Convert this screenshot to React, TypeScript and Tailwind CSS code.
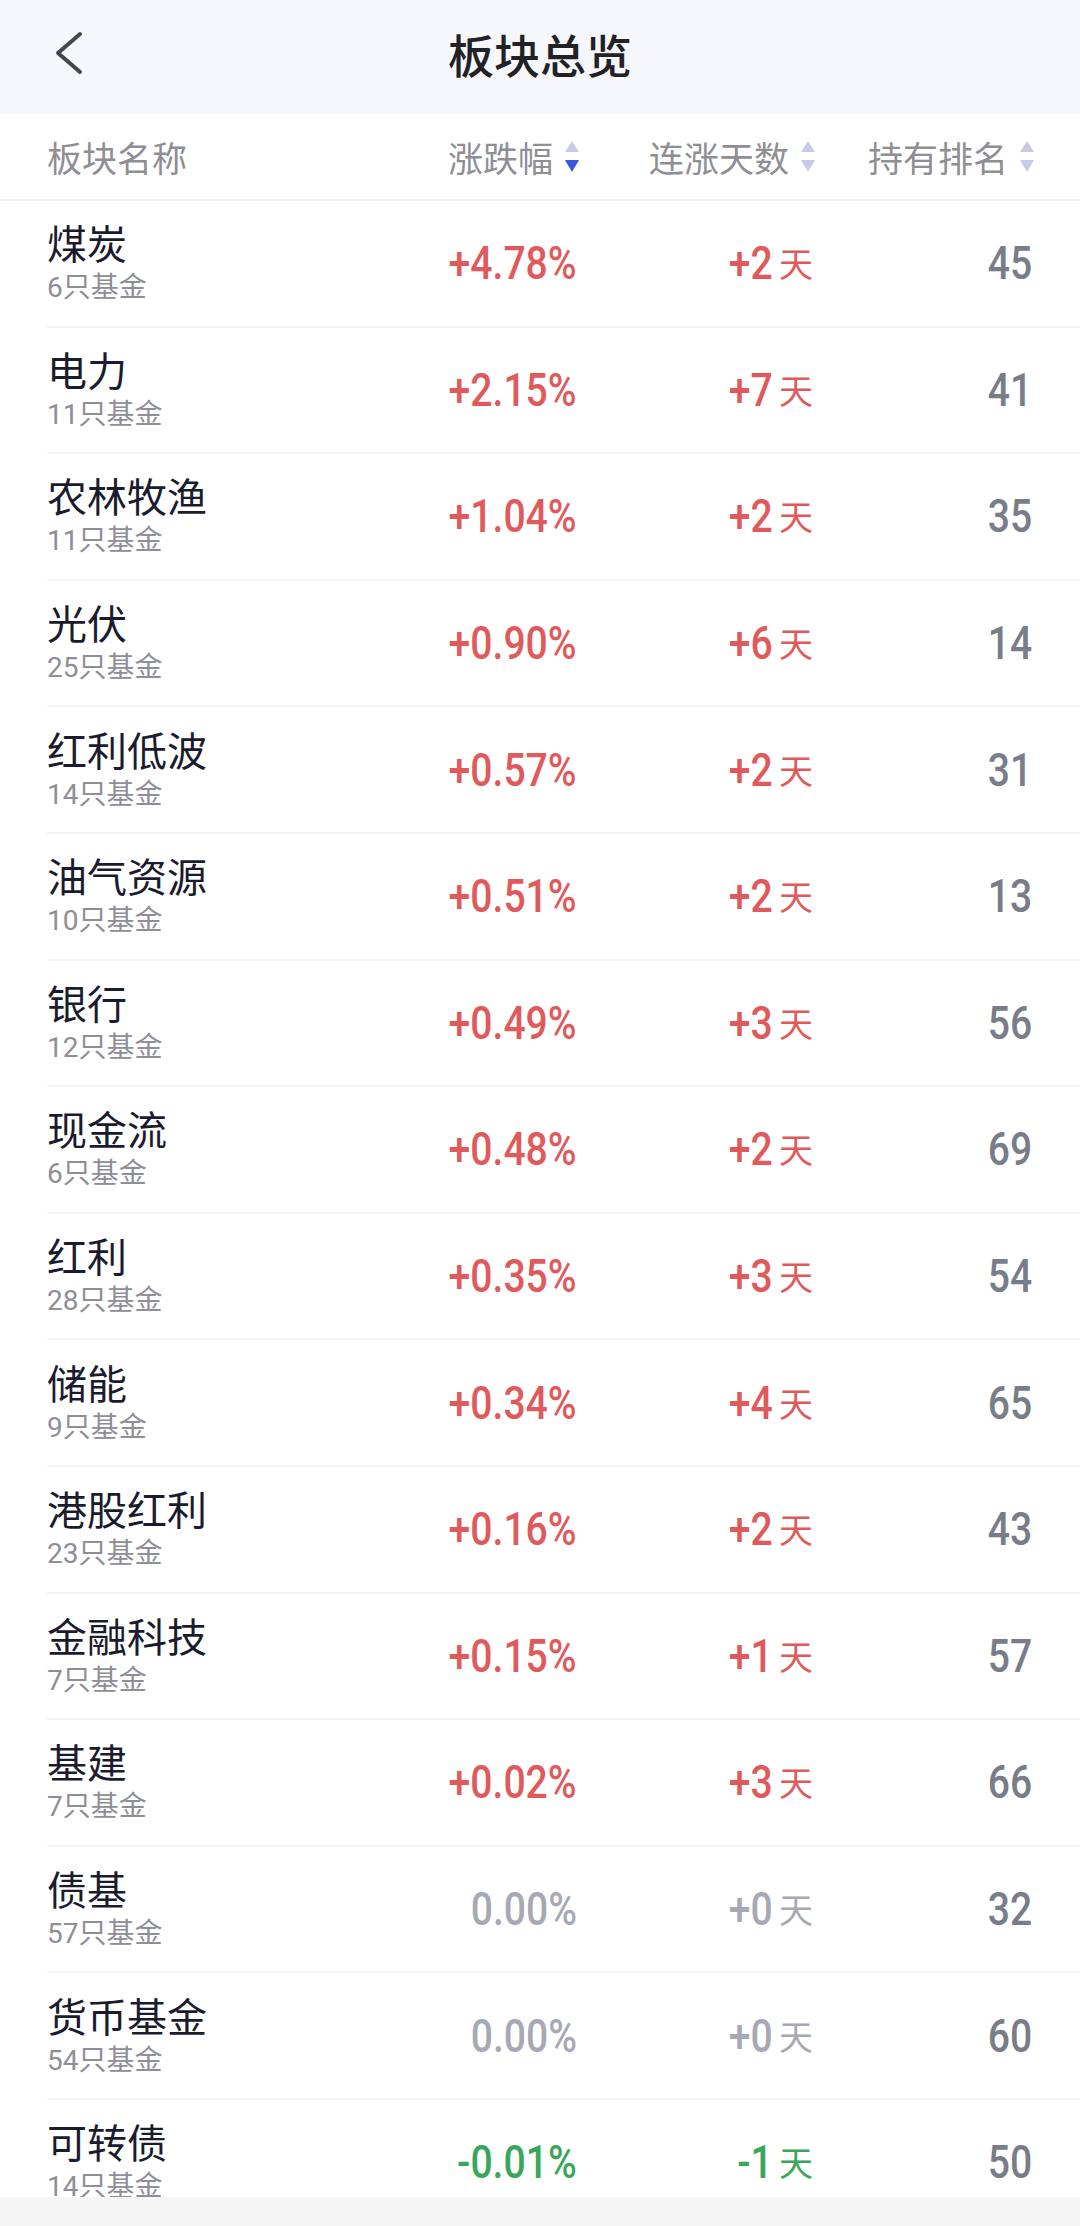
import React from "react";

type Row = {
  name: string;
  count: number;
  change: string;
  days: string;
  rank: number;
  trend: "up" | "flat" | "down";
};

const rows: Row[] = [
  { name: "煤炭", count: 6, change: "+4.78%", days: "+2", rank: 45, trend: "up" },
  { name: "电力", count: 11, change: "+2.15%", days: "+7", rank: 41, trend: "up" },
  { name: "农林牧渔", count: 11, change: "+1.04%", days: "+2", rank: 35, trend: "up" },
  { name: "光伏", count: 25, change: "+0.90%", days: "+6", rank: 14, trend: "up" },
  { name: "红利低波", count: 14, change: "+0.57%", days: "+2", rank: 31, trend: "up" },
  { name: "油气资源", count: 10, change: "+0.51%", days: "+2", rank: 13, trend: "up" },
  { name: "银行", count: 12, change: "+0.49%", days: "+3", rank: 56, trend: "up" },
  { name: "现金流", count: 6, change: "+0.48%", days: "+2", rank: 69, trend: "up" },
  { name: "红利", count: 28, change: "+0.35%", days: "+3", rank: 54, trend: "up" },
  { name: "储能", count: 9, change: "+0.34%", days: "+4", rank: 65, trend: "up" },
  { name: "港股红利", count: 23, change: "+0.16%", days: "+2", rank: 43, trend: "up" },
  { name: "金融科技", count: 7, change: "+0.15%", days: "+1", rank: 57, trend: "up" },
  { name: "基建", count: 7, change: "+0.02%", days: "+3", rank: 66, trend: "up" },
  { name: "债基", count: 57, change: "0.00%", days: "+0", rank: 32, trend: "flat" },
  { name: "货币基金", count: 54, change: "0.00%", days: "+0", rank: 60, trend: "flat" },
  { name: "可转债", count: 14, change: "-0.01%", days: "-1", rank: 50, trend: "down" },
];

const cjk = "font-['Noto_Sans_CJK_SC',sans-serif]";
const num = "font-['Roboto','Noto_Sans_CJK_SC',sans-serif]";

function trendColor(t: Row["trend"]) {
  if (t === "up") return "text-[#e05a5c]";
  if (t === "down") return "text-[#3aa65b]";
  return "text-[#a6a9b3]";
}

function SortIcon({ active }: { active?: boolean }) {
  return (
    <svg width="14" height="31" viewBox="0 0 14 31" className="ml-[12px] shrink-0">
      <polygon points="7,0 14,11 0,11" fill="#c9cbe6" />
      <polygon points="0,19 14,19 7,31" fill={active ? "#3b57d9" : "#c9cbe6"} />
    </svg>
  );
}

function HeaderCell({ label, active, width }: { label: string; active?: boolean; width: string }) {
  return (
    <div className={`flex items-center justify-end ${width}`}>
      <span className={`${cjk} text-[35px] leading-none text-[#8e8e94]`}>{label}</span>
      <SortIcon active={active} />
    </div>
  );
}

function Num({ children }: { children: React.ReactNode }) {
  return (
    <span className={`${num} inline-block origin-right scale-x-[0.85] font-medium text-[46px] leading-none`}>
      {children}
    </span>
  );
}

export default function App() {
  return (
    <div className="flex h-[2226px] w-[1080px] flex-col overflow-hidden bg-white">
      <div className="flex h-[114px] shrink-0 items-center bg-[#f6f7fb] pb-[8px]">
        <div className="flex w-[200px] pl-[54px]">
          <svg width="30" height="44" viewBox="0 0 30 44">
            <polyline
              points="26,3 4,22 26,41"
              fill="none"
              stroke="#46464e"
              strokeWidth="4"
              strokeLinecap="round"
              strokeLinejoin="round"
            />
          </svg>
        </div>
        <div className={`flex-1 text-center ${cjk} text-[46px] font-medium leading-none text-[#222226]`}>
          板块总览
        </div>
        <div className="w-[200px]" />
      </div>

      <div className="flex h-[87px] shrink-0 items-center border-b-2 border-[#f1f1f3] pl-[47px] pr-[46px]">
        <div className={`flex-1 ${cjk} text-[35px] leading-none text-[#8e8e94]`}>板块名称</div>
        <HeaderCell label="涨跌幅" active width="w-[220px]" />
        <HeaderCell label="连涨天数" width="w-[236px]" />
        <HeaderCell label="持有排名" width="w-[219px]" />
      </div>

      <div className="flex-1 overflow-hidden">
        {rows.map((r) => (
          <div key={r.name} className="flex h-[126.6px] items-center border-b-2 border-[#f3f3f5] ml-[47px] pr-[48px]">
            <div className="flex flex-1 flex-col">
              <span className={`${cjk} text-[40px] leading-[48px] text-[#1b1b2f]`}>{r.name}</span>
              <span className={`${num} mt-[2px] text-[28px] leading-[40px] text-[#8d8e96]`}>
                {r.count}只基金
              </span>
            </div>
            <div className={`flex w-[220px] justify-end ${trendColor(r.trend)}`}>
              <Num>{r.change}</Num>
            </div>
            <div className={`flex w-[236px] items-center justify-end ${trendColor(r.trend)}`}>
              <Num>{r.days}</Num>
              <span className={`${cjk} ml-[6px] text-[34px] leading-none`}>天</span>
            </div>
            <div className="flex w-[219px] justify-end text-[#797c89]">
              <Num>{r.rank}</Num>
            </div>
          </div>
        ))}
      </div>

      <div className="h-[29px] shrink-0 bg-[#f5f5f6]" />
    </div>
  );
}
